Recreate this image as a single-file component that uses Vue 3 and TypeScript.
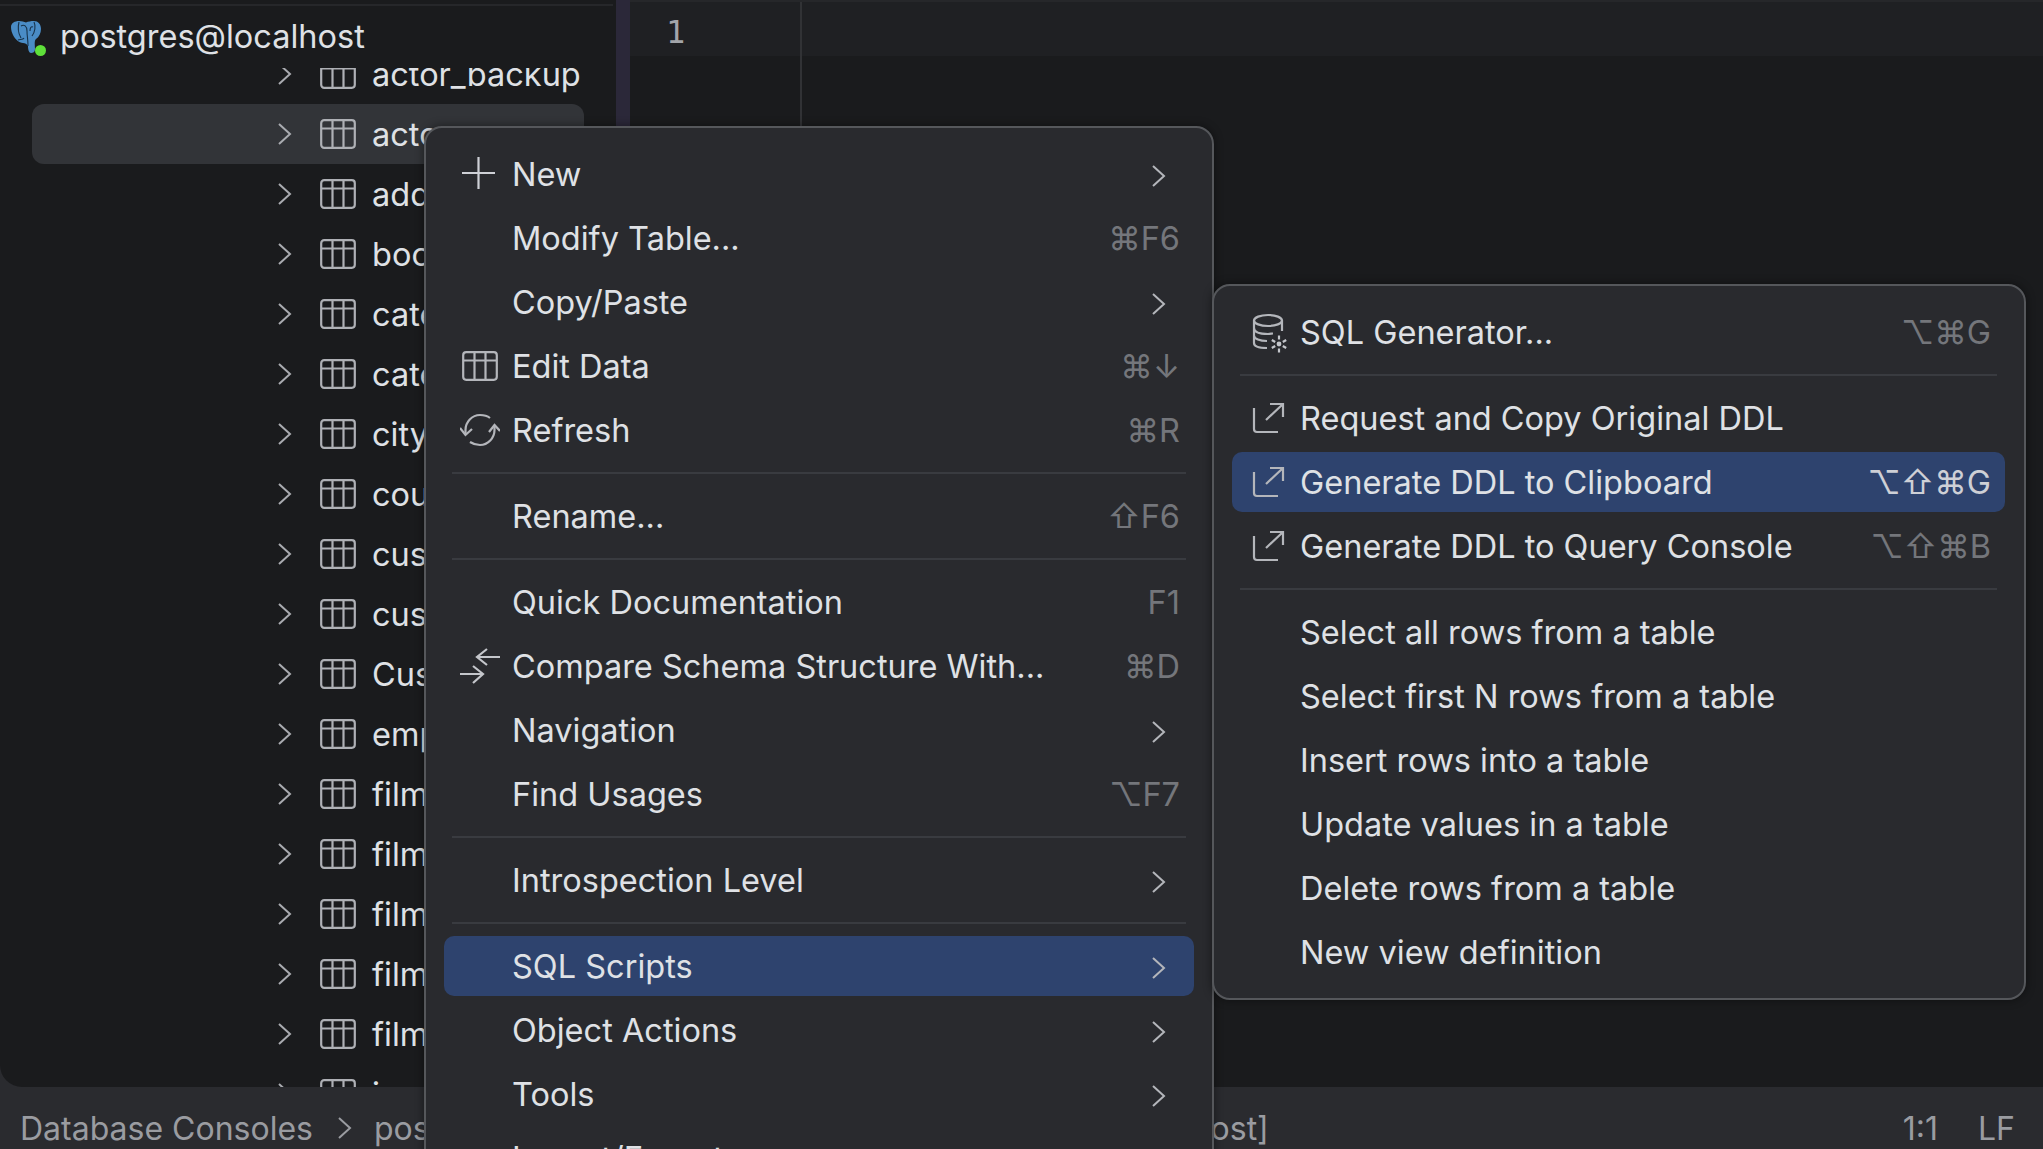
<script setup lang="ts">
type Entry = { sep?: boolean; label?: string; icon?: string; key?: string; arrow?: boolean; active?: boolean }

const tables: string[] = [
  'actor_backup', 'actor', 'address', 'book', 'category', 'category_old', 'city', 'country',
  'customer', 'customer_list', 'Customer', 'employee', 'film', 'film_actor', 'film_category',
  'film_list', 'film_text', 'inventory',
]

const mainMenu: Entry[] = [
  { label: 'New', icon: 'plus', arrow: true },
  { label: 'Modify Table...', key: '⌘F6' },
  { label: 'Copy/Paste', arrow: true },
  { label: 'Edit Data', icon: 'table', key: '⌘↓' },
  { label: 'Refresh', icon: 'refresh', key: '⌘R' },
  { sep: true },
  { label: 'Rename...', key: '⇧F6' },
  { sep: true },
  { label: 'Quick Documentation', key: 'F1' },
  { label: 'Compare Schema Structure With...', icon: 'compare', key: '⌘D' },
  { label: 'Navigation', arrow: true },
  { label: 'Find Usages', key: '⌥F7' },
  { sep: true },
  { label: 'Introspection Level', arrow: true },
  { sep: true },
  { label: 'SQL Scripts', arrow: true, active: true },
  { label: 'Object Actions', arrow: true },
  { label: 'Tools', arrow: true },
  { label: 'Import/Export', arrow: true },
]

const subMenu: Entry[] = [
  { label: 'SQL Generator...', icon: 'db', key: '⌥⌘G' },
  { sep: true },
  { label: 'Request and Copy Original DDL', icon: 'export' },
  { label: 'Generate DDL to Clipboard', icon: 'export', key: '⌥⇧⌘G', active: true },
  { label: 'Generate DDL to Query Console', icon: 'export', key: '⌥⇧⌘B' },
  { sep: true },
  { label: 'Select all rows from a table' },
  { label: 'Select first N rows from a table' },
  { label: 'Insert rows into a table' },
  { label: 'Update values in a table' },
  { label: 'Delete rows from a table' },
  { label: 'New view definition' },
]
</script>

<template>
  <div class="ide">
    <div class="main">
      <aside class="side">
        <div class="side-rule"></div>
        <div class="head">
          <svg class="pg" viewBox="0 0 32 33" width="32" height="33">
            <path d="M1 6C1 2 5 0 9 0C12 0 14 1 16 1.500C18 .5 21 0 24 0C28 0 31 3 31 8C31 12 29 16 26 18C24 20 25 24 25 28C25 31 23 32 21 32C19 32 18 29 18 25C17 23 15 22 13 22C9 22 5 18 3 14C2 12 1 9 1 6Z" fill="#4a8cc6" />
            <path d="M9 1C8 5 8 12 11 17M24 1C26 5 25 11 22 15M11 5C14 3 17 5 17 10C17 15 18 18 18 25M23 6C21 5 20 7 20 10M8 19C10 18 13 19 14 17" fill="none" stroke="#17324a" stroke-width="1.100" />
          </svg>
          <span class="dot"></span>
          <span class="head-text">postgres@localhost</span>
        </div>
        <div class="tree">
          <div v-for="(t, i) in tables" :key="t" class="row" :class="{ sel: i === 1 }">
            <svg class="chev" viewBox="0 0 14 26" width="14" height="26"><path d="M1 3L12 13L1 23" fill="none" stroke="#a9abb0" stroke-width="2" /></svg>
            <svg class="tbl" viewBox="0 0 36 30" width="36" height="30">
              <rect x="1.200" y="1.200" width="33.600" height="27.600" rx="3" fill="none" stroke="#aeb0b5" stroke-width="2.200" />
              <path d="M1 9.500H35M12.500 1V29M23.500 1V29" fill="none" stroke="#aeb0b5" stroke-width="2.200" />
            </svg>
            <span class="row-text">{{ t }}</span>
          </div>
        </div>
      </aside>
      <div class="strip"></div>
      <section class="editor">
        <div class="caret-row"></div>
        <div class="gutter"><span class="lineno">1</span></div>
        <div class="code"></div>
      </section>
    </div>

    <footer class="status">
      <span class="crumb">Database Consoles</span>
      <svg class="crumb-chev" viewBox="0 0 14 26" width="14" height="26"><path d="M1 3L12 13L1 23" fill="none" stroke="#9a9ca1" stroke-width="2" /></svg>
      <span class="crumb">postgres</span>
      <span class="crumb crumb-end">console [postgres@localhost]</span>
      <span class="pos">1:1</span>
      <span class="pos lf">LF</span>
    </footer>

    <div class="menu menu-main">
      <template v-for="(m, i) in mainMenu" :key="i">
        <div v-if="m.sep" class="sep"><i></i></div>
        <div v-else class="item" :class="{ active: m.active }">
          <span class="ico">
            <svg v-if="m.icon === 'plus'" viewBox="0 0 40 40" width="40" height="40"><path d="M2 19H35M18.500 3V35" fill="none" stroke="#ced0d6" stroke-width="2.200" /></svg>
            <svg v-else-if="m.icon === 'table'" viewBox="0 0 40 40" width="40" height="40">
              <rect x="3.200" y="6.200" width="33.600" height="27.600" rx="3" fill="none" stroke="#b4b6bb" stroke-width="2.200" />
              <path d="M3 14.500H37M14.500 6V34M25.500 6V34" fill="none" stroke="#b4b6bb" stroke-width="2.200" />
            </svg>
            <svg v-else-if="m.icon === 'refresh'" viewBox="0 0 40 40" width="40" height="40">
              <path d="M5.500 25V20C5.500 12 12 5 20 5C24 5 27.500 6 30 8M34.500 15V20C34.500 28 28 35 20 35C16 35 13 34 10 32" fill="none" stroke="#b4b6bb" stroke-width="2.200" />
              <path d="M0 18L5.500 25L12 19M29 22L34.500 15L40 21" fill="none" stroke="#b4b6bb" stroke-width="2.200" />
            </svg>
            <svg v-else-if="m.icon === 'compare'" viewBox="0 0 40 40" width="40" height="40">
              <path d="M17 11H40M27 3L17 11L27 19M0 28H23M13 20L23 28L13 37" fill="none" stroke="#c4c6cb" stroke-width="2.200" />
            </svg>
          </span>
          <span class="label">{{ m.label }}</span>
          <span v-if="m.key" class="key">{{ m.key }}</span>
          <svg v-if="m.arrow" class="arrow" viewBox="0 0 14 26" width="14" height="26"><path d="M1 3L12 13L1 23" fill="none" stroke="#b4b6bb" stroke-width="2" /></svg>
        </div>
      </template>
    </div>

    <div class="menu menu-sub">
      <template v-for="(m, i) in subMenu" :key="i">
        <div v-if="m.sep" class="sep"><i></i></div>
        <div v-else class="item" :class="{ active: m.active }">
          <span class="ico">
            <svg v-if="m.icon === 'db'" viewBox="0 0 40 42" width="40" height="42">
              <ellipse cx="16" cy="8.500" rx="14" ry="5.500" fill="none" stroke="#b4b6bb" stroke-width="2.200" />
              <path d="M2 8.500V31C2 34.500 8 36 15 36M30 8.500V19M2 16C2 20 8 22 16 22C18 22 20 21.500 21 21.500M2 23.500C2 27 8 29 15 29" fill="none" stroke="#b4b6bb" stroke-width="2.200" />
              <circle cx="27" cy="32" r="2.400" fill="#c4c6cb" />
              <path d="M27 23.500V27.500M27 36.500V40.500M19.800 28L23.200 30M30.800 34L34.200 36M19.800 36L23.200 34M30.800 30L34.200 28" fill="none" stroke="#c4c6cb" stroke-width="2.200" />
            </svg>
            <svg v-else-if="m.icon === 'export'" viewBox="0 0 40 40" width="40" height="40">
              <path d="M2 10V31C2 33 3 34 5 34H26M14 22L31 6M18 6H31V19" fill="none" stroke="#b4b6bb" stroke-width="2.200" />
            </svg>
          </span>
          <span class="label">{{ m.label }}</span>
          <span v-if="m.key" class="key">{{ m.key }}</span>
        </div>
      </template>
    </div>
  </div>
</template>

<style>
html, body { margin: 0; background: #1a1b1d; overflow: hidden; }
</style>

<style scoped>
.ide {
  width: 2043px;
  height: 1149px;
  position: relative;
  overflow: hidden;
  display: flex;
  flex-direction: column;
  background: #2a2b2f;
  font-family: Inter, "Liberation Sans", sans-serif;
  font-size: 32.5px;
  color: #dfe1e5;
}
.main { flex: 1; display: flex; min-height: 0; background: #2a2b2f; }
.side {
  width: 616px;
  display: flex;
  flex-direction: column;
  background: #1a1b1d;
  border-bottom-left-radius: 22px;
  overflow: hidden;
}
.side-rule { height: 2px; margin: 4px 3px 0 0; background: #26272a; flex: none; }
.head { height: 62px; display: flex; align-items: center; padding-left: 10px; position: relative; flex: none; }
.pg { flex: none; margin-top: 1px; }
.dot { position: absolute; left: 35px; top: 39px; width: 11px; height: 11px; border-radius: 50%; background: #5fe03a; }
.head-text { margin-left: 18px; margin-top: -2px; }
.tree { flex: 1; min-height: 0; overflow: hidden; }
.row {
  height: 60px;
  margin-left: 32px;
  width: 552px;
  display: flex;
  align-items: center;
  border-radius: 12px;
  box-sizing: border-box;
  padding-left: 246px;
  white-space: nowrap;
}
.row:first-child { margin-top: -24px; }
.row.sel { background: #323438; }
.chev { flex: none; }
.tbl { flex: none; margin-left: 28px; }
.row-text { margin-left: 16px; }
.strip { width: 14px; background: #2b2839; flex: none; }
.editor { flex: 1; position: relative; display: flex; background: #1a1b1d; min-width: 0; border-top: 2px solid #26272a; }
.caret-row { position: absolute; left: 0; right: 0; top: 0; height: 54px; background: #1f2023; }
.gutter { width: 172px; border-right: 2px solid #313235; box-sizing: border-box; flex: none; position: relative; }
.lineno { display: block; margin: 11px 0 0 36px; font-size: 32px; line-height: 38px; color: #a3a5aa; font-family: "DejaVu Sans Mono", monospace; }
.code { flex: 1; }
.status { height: 62px; flex: none; display: flex; align-items: center; background: #2a2b2f; padding: 20px 28px 0 20px; box-sizing: border-box; white-space: nowrap; color: #9a9ca1; font-size: 32px; }
.crumb-chev { margin: 0 22px 0 25px; flex: none; }
.crumb-end { margin-left: 311px; }
.pos { margin-left: auto; }
.lf { margin-left: 40px; }

.menu {
  position: absolute;
  box-sizing: border-box;
  background: #292a2e;
  border: 2px solid #55575b;
  border-radius: 18px;
  padding: 16px 18px;
  display: flex;
  flex-direction: column;
  gap: 4px;
  box-shadow: 0 0 10px rgba(0, 0, 0, .45);
}
.menu-main { left: 424px; top: 126px; width: 790px; height: 1100px; }
.menu-sub { left: 1212px; top: 284px; width: 814px; height: 716px; padding-right: 19px; }
.item {
  height: 60px;
  flex: none;
  display: flex;
  align-items: center;
  padding: 0 14px 0 20px;
  border-radius: 10px;
  white-space: nowrap;
}
.item.active { background: #2e436e; }
.ico { width: 40px; height: 40px; flex: none; margin-left: -4px; margin-right: 12px; display: block; }
.menu-sub .ico { margin-left: 0; margin-right: 8px; }
.ico svg { display: block; }
.label { flex: 1; }
.key { color: #74767b; }
.item.active .key { color: #ced0d6; }
.arrow { flex: none; margin: 4px 14px 0 0; }
.sep { height: 18px; display: flex; align-items: center; padding: 0 8px; flex: none; }
.sep i { display: block; width: 100%; height: 2px; background: #393b40; }
</style>
